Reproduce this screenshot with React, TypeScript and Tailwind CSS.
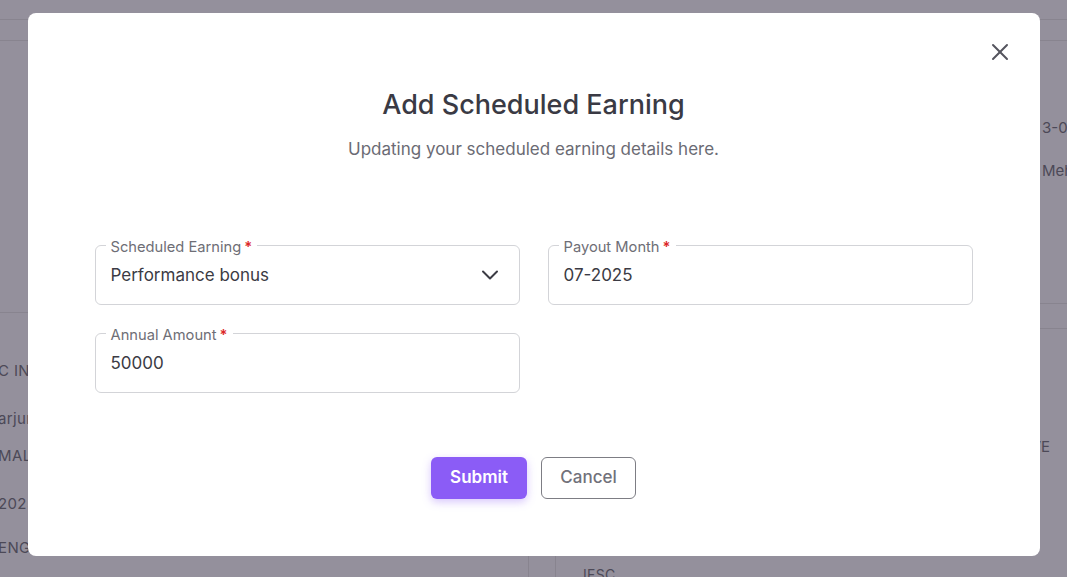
import { X, ChevronDown } from "lucide-react";
import type { ReactNode } from "react";

function Field({ label, children }: { label: string; children: ReactNode }) {
  return (
    <fieldset className="min-w-0 rounded-md border border-[#d3d4d8] pl-[10px] pr-[15px] pt-[7px] pb-[17px]">
      <legend className="px-[5px] pt-[4px] text-[14.7px] leading-[18px] text-[#6e6e76]">
        {label}
        <span className="ml-[3px] font-semibold text-[#dc2626]">*</span>
      </legend>
      <div className="flex h-[24px] items-center justify-between pl-[5px] text-[17px] leading-[24px] text-[#3b3b44]">
        {children}
      </div>
    </fieldset>
  );
}

function BackgroundPage() {
  return (
    <div className="flex h-full flex-col whitespace-nowrap text-[15px] text-[#4c4957]">
      <div className="h-[20px] shrink-0 border-b border-[#88848f]" />
      <div className="h-[21px] shrink-0 border-b border-[#88848f]" />
      <div className="flex flex-1">
        {/* left card */}
        <div className="flex w-[529px] shrink-0 flex-col border-r border-[#88848f]">
          <div className="h-[272px] shrink-0 border-b border-[#88848f]" />
          <div className="-ml-[2px] flex flex-col tracking-wide">
            <span className="mt-[48px] leading-[20px]">C INFORMATION</span>
            <span className="mt-[28px] leading-[20px]">arjun</span>
            <span className="mt-[17px] leading-[20px]">MALE</span>
            <span className="mt-[28px] leading-[20px]">2025</span>
            <span className="mt-[24px] leading-[20px]">ENGINEERING</span>
          </div>
        </div>
        <div className="w-[26px] shrink-0" />
        {/* right card */}
        <div className="flex w-[512px] shrink-0 flex-col border-l border-[#88848f]">
          <div className="flex h-[263px] shrink-0 flex-col border-b border-[#88848f] pl-[486px]">
            <span className="mt-[77px] leading-[20px]">3-03-2025</span>
            <span className="mt-[23px] leading-[20px]">Mehta</span>
          </div>
          <div className="h-[25px] shrink-0 border-b border-[#88848f]" />
          <div className="flex justify-end pr-[17px]">
            <span className="mt-[108px] leading-[20px]">ACTIVE</span>
          </div>
          <div className="pl-[27px]">
            <span className="mt-[108px] block text-[14px] leading-[20px] tracking-wide">IFSC</span>
          </div>
        </div>
      </div>
    </div>
  );
}

export default function App() {
  return (
    <div className="relative h-[577px] w-[1067px] overflow-hidden bg-[#94909c] font-['Inter',sans-serif]">
      <BackgroundPage />

      <div className="absolute inset-0 flex justify-center pt-[13px]">
        <div className="relative flex h-[543px] w-[1012px] flex-col items-center rounded-lg bg-white px-[67px] pt-[76px]">
          <button className="absolute right-[26px] top-[25px] text-[#55555e]">
            <X size={28} strokeWidth={1.7} />
          </button>

          <h2 className="text-[27px] font-medium leading-[32px] text-[#3a3a44]">
            Add Scheduled Earning
          </h2>
          <p className="mt-[16px] text-[17px] leading-[24px] text-[#6b6b74]">
            Updating your scheduled earning details here.
          </p>

          <div className="mt-[73px] grid w-full grid-cols-2 gap-x-[28px] gap-y-[17px]">
            <Field label="Scheduled Earning">
              <span>Performance bonus</span>
              <ChevronDown size={28} strokeWidth={1.7} className="text-[#3b3b44]" />
            </Field>
            <Field label="Payout Month">
              <span>07-2025</span>
            </Field>
            <Field label="Annual Amount">
              <span>50000</span>
            </Field>
          </div>

          <div className="mt-[64px] flex gap-[14px]">
            <button className="h-[42px] w-[96px] rounded-md bg-[#8b5cf6] text-[17px] font-semibold text-white shadow-[0_3px_8px_rgba(139,92,246,0.35)]">
              Submit
            </button>
            <button className="h-[42px] w-[95px] rounded-md border border-[#7d7d84] text-[17px] font-medium text-[#71717a]">
              Cancel
            </button>
          </div>
        </div>
      </div>
    </div>
  );
}
